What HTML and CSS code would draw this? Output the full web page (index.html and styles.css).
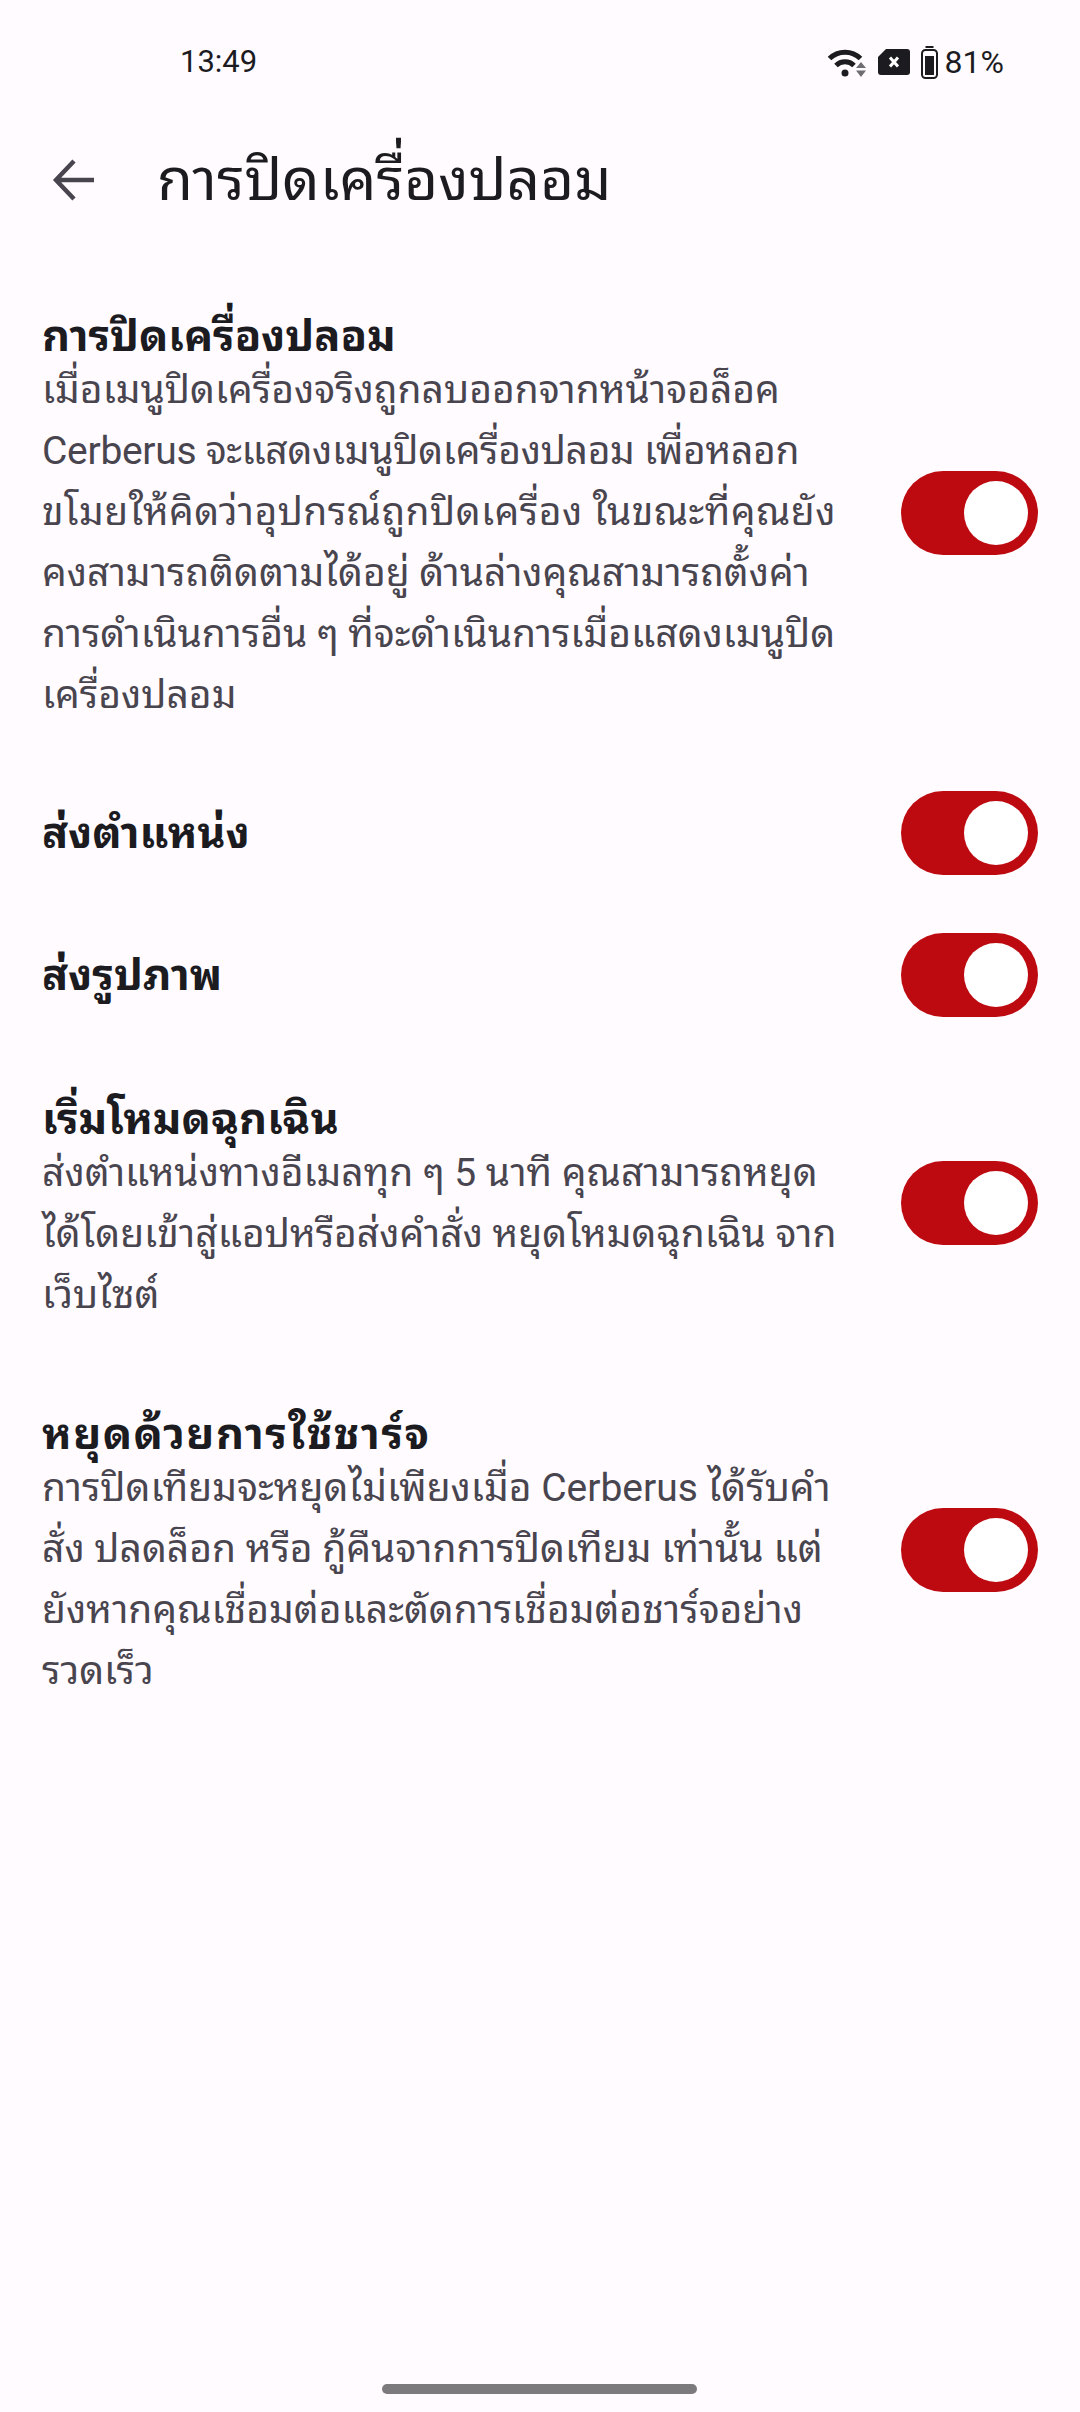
FILE: index.html
```html
<!DOCTYPE html>
<html lang="th">
<head>
<meta charset="utf-8">
<title>การปิดเครื่องปลอม</title>
<link rel="stylesheet" href="styles.css">
</head>
<body>
<div class="screen">
  <div class="status">
    <span class="time">13:49</span>
    <div class="status-icons">
      <svg class="wifi" width="39" height="29" viewBox="0 0 39 29"><path d="M2.500 10.500C11 2 25 2 33.500 10.500" fill="none" stroke="#1c1b1f" stroke-width="5"/><path d="M9 17.500C14 12.500 22 12.500 27 17.500" fill="none" stroke="#1c1b1f" stroke-width="5"/><circle cx="18" cy="25" r="3.500" fill="#1c1b1f"/><path d="M34 14l5 6h-10zM34 29l5-6.500h-10z" fill="#6f6d72"/></svg>
      <svg class="sim" width="32" height="26" viewBox="0 0 32 26"><path d="M8 0H29a3 3 0 0 1 3 3V23a3 3 0 0 1-3 3H3a3 3 0 0 1-3-3V8Z" fill="#1c1b1f"/><path d="M12 8.500l8 9M20 8.500l-8 9" stroke="#fff" stroke-width="3"/></svg>
      <svg class="batt" width="17" height="33" viewBox="0 0 17 33"><rect x="4.500" y="0" width="8" height="2" fill="#1c1b1f"/><rect x="1" y="4" width="15" height="28" rx="3.500" fill="none" stroke="#1c1b1f" stroke-width="2"/><rect x="4" y="10" width="9" height="19" fill="#1c1b1f"/></svg>
      <span class="pct">81%</span>
    </div>
  </div>
  <header class="appbar">
    <svg class="back" width="44" height="44" viewBox="0 0 44 44"><path d="M42 22H5M22 3L4 22l18 19" fill="none" stroke="#49454f" stroke-width="4.500"/></svg>
    <h1 class="page-title">การปิดเครื่องปลอม</h1>
  </header>
  <main class="list">
    <section class="row row-first">
      <div class="text">
        <h2 class="title">การปิดเครื่องปลอม</h2>
        <p class="desc">เมื่อเมนูปิดเครื่องจริงถูกลบออกจากหน้าจอล็อค<br><span class="tight">Cerberus จะแสดงเมนูปิดเครื่องปลอม เพื่อหลอก</span><br><span class="loose">ขโมยให้คิดว่าอุปกรณ์ถูกปิดเครื่อง ในขณะที่คุณยัง</span><br>คงสามารถติดตามได้อยู่ ด้านล่างคุณสามารถตั้งค่า<br>การดำเนินการอื่น ๆ ที่จะดำเนินการเมื่อแสดงเมนูปิด<br>เครื่องปลอม</p>
      </div>
      <div class="switch"><span class="thumb"></span></div>
    </section>
    <section class="row row-single">
      <div class="text"><h2 class="title-solo">ส่งตำแหน่ง</h2></div>
      <div class="switch"><span class="thumb"></span></div>
    </section>
    <section class="row row-single">
      <div class="text"><h2 class="title-solo">ส่งรูปภาพ</h2></div>
      <div class="switch"><span class="thumb"></span></div>
    </section>
    <section class="row row-fourth">
      <div class="text">
        <h2 class="title title-low">เริ่มโหมดฉุกเฉิน</h2>
        <p class="desc">ส่งตำแหน่งทางอีเมลทุก ๆ 5 นาที คุณสามารถหยุด<br>ได้โดยเข้าสู่แอปหรือส่งคำสั่ง หยุดโหมดฉุกเฉิน จาก<br>เว็บไซต์</p>
      </div>
      <div class="switch"><span class="thumb"></span></div>
    </section>
    <section class="row row-last">
      <div class="text">
        <h2 class="title title-low title-wide">หยุดด้วยการใช้ชาร์จ</h2>
        <p class="desc">การปิดเทียมจะหยุดไม่เพียงเมื่อ Cerberus ได้รับคำ<br>สั่ง ปลดล็อก หรือ กู้คืนจากการปิดเทียม เท่านั้น แต่<br>ยังหากคุณเชื่อมต่อและตัดการเชื่อมต่อชาร์จอย่าง<br>รวดเร็ว</p>
      </div>
      <div class="switch"><span class="thumb"></span></div>
    </section>
  </main>
  <div class="nav-pill"></div>
</div>
</body>
</html>
```
FILE: styles.css
```css
* { box-sizing: border-box; margin: 0; padding: 0; }
html, body { width: 1080px; height: 2412px; overflow: hidden; }
body { background: #fffbff; font-family: Roboto, "Noto Sans Thai Looped", sans-serif; color: #1c1b1f; }
.screen { width: 1080px; height: 2412px; display: flex; flex-direction: column; position: relative; }
.status { height: 122px; padding: 43px 76px 0 180px; display: flex; justify-content: space-between; align-items: flex-start; }
.time { font-size: 31px; line-height: 38px; }
.status-icons { display: flex; align-items: center; height: 38px; }
.wifi { margin-right: 12px; }
.sim { margin-right: 11px; }
.batt { margin-right: 7px; }
.pct { font-size: 32px; line-height: 38px; }
.appbar { height: 116px; display: flex; align-items: center; padding-left: 52px; gap: 61px; }
.page-title { font-size: 58.5px; font-weight: 400; line-height: 70px; }
.list { display: flex; flex-direction: column; gap: 72px; padding-top: 60px; }
.row { display: flex; align-items: center; justify-content: space-between; padding: 0 42px 0 42px; }
.row-single { height: 70px; }
.row-first .switch { margin-top: 2px; }
.row-fourth .switch { margin-bottom: 2px; }
.row-last { margin-top: -1px; }
.text { width: 820px; white-space: nowrap; }
.title { font-size: 43.3px; font-weight: 700; line-height: 46px; padding-top: 16px; }
.title-low { padding-top: 15px; }
.title-wide { letter-spacing: 1.5px; }
.title-solo { font-size: 43.3px; font-weight: 700; line-height: 46px; padding-top: 2px; }
.desc { font-size: 39px; line-height: 61px; color: #49454f; }
.tight { letter-spacing: -0.3px; }
.loose { letter-spacing: 0.45px; }
.switch { width: 137px; height: 84px; border-radius: 42px; background: #bd0a10; display: flex; align-items: center; justify-content: flex-end; padding-right: 10px; flex: none; }
.thumb { width: 64px; height: 64px; border-radius: 50%; background: #fff; }
.nav-pill { position: absolute; left: 382px; top: 2384px; width: 315px; height: 10px; border-radius: 5px; background: #7d7a7e; }
```
